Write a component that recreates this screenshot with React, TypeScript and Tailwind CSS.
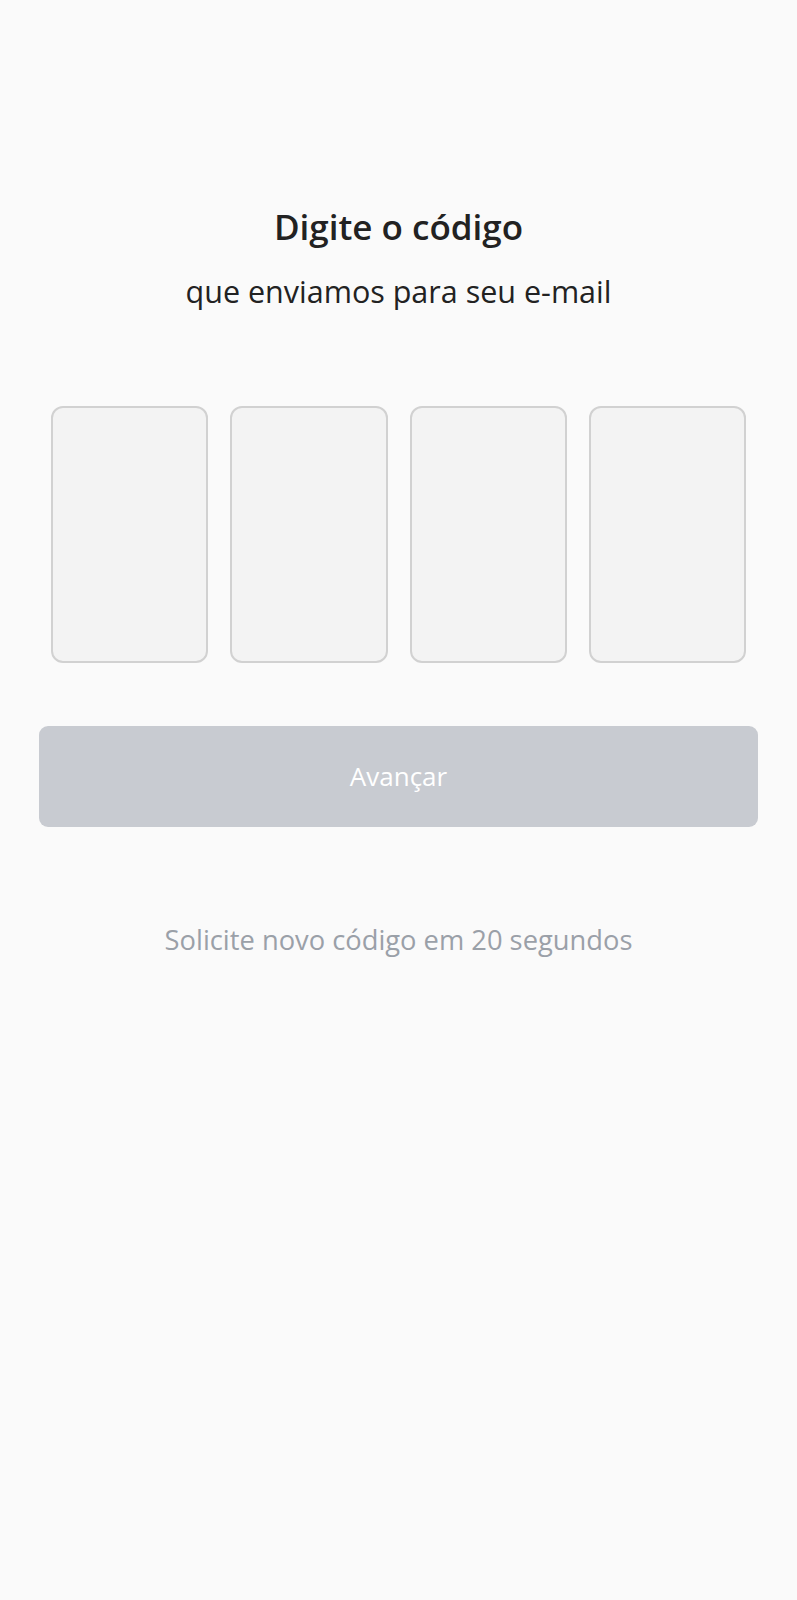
export default function App() {
  const digits = [0, 1, 2, 3];
  return (
    <div
      className="min-h-[1600px] w-full bg-[#fafafa] flex flex-col items-center"
      style={{ fontFamily: '"Open Sans", "Noto Sans", sans-serif' }}
    >
      <h1 className="mt-[204px] text-[35px] leading-[46px] font-semibold text-[#222222]">
        Digite o código
      </h1>
      <p className="mt-[21px] text-[30.5px] leading-[40px] text-[#222222]">
        que enviamos para seu e-mail
      </p>

      <div className="mt-[95px] w-full px-[51px] grid grid-cols-4 gap-[22px]">
        {digits.map((d) => (
          <div
            key={d}
            className="h-[257px] rounded-[12px] border-2 border-[#d1d1d1] bg-[#f3f3f3]"
          />
        ))}
      </div>

      <div className="mt-[63px] w-full px-[39px]">
        <button className="w-full h-[101px] rounded-[9px] bg-[#c8cbd1] text-white text-[26px]">
          Avançar
        </button>
      </div>

      <p className="mt-[95px] text-[27.3px] leading-[36px] text-[#9aa0a8]">
        Solicite novo código em 20 segundos
      </p>
    </div>
  );
}
